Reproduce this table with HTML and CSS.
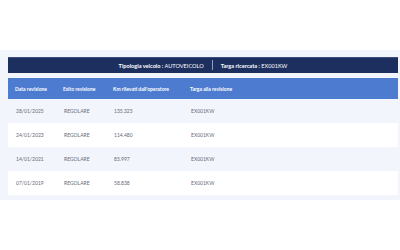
FILE: index.html
```html
<!DOCTYPE html>
<html lang="it">
<head>
<meta charset="utf-8">
<link rel="stylesheet" href="styles.css">
</head>
<body>
<section class="panel">
  <div class="summary">
    <span><b>Tipologia veicolo :</b> AUTOVEICOLO</span>
    <span class="sep"></span>
    <span><b>Targa ricercata :</b> EX001KW</span>
  </div>
  <div class="grid">
    <div class="row head"><span>Data revisione</span><span>Esito revisione</span><span>Km rilevati dall'operatore</span><span>Targa alla revisione</span></div>
    <div class="row"><span>28/01/2025</span><span>REGOLARE</span><span>135.325</span><span>EX001KW</span></div>
    <div class="row"><span>24/01/2023</span><span>REGOLARE</span><span>114.480</span><span>EX001KW</span></div>
    <div class="row"><span>14/01/2021</span><span>REGOLARE</span><span>85.997</span><span>EX001KW</span></div>
    <div class="row"><span>07/01/2019</span><span>REGOLARE</span><span>58.838</span><span>EX001KW</span></div>
  </div>
</section>
</body>
</html>
```
FILE: styles.css
```css
html, body { margin: 0; padding: 0; background: #ffffff; }
body { font-family: Lato, "Open Sans", sans-serif; }
.panel {
  margin-top: 50px;
  background: #f2f6fc;
  padding: 7px 2px 5px 8px;
}
.summary {
  height: 16px;
  background: #1d2f5f;
  color: #ffffff;
  font-size: 5.6px;
  display: flex;
  align-items: center;
  justify-content: center;
  gap: 8px;
  box-shadow: inset 0 1px 0 #3a4d7c;
}
.summary b { font-weight: 700; }
.sep { width: 1px; height: 10px; background: #8ea0c6; }
.grid { margin-top: 5px; display: flex; flex-direction: column; }
.row {
  display: grid;
  grid-template-columns: 48px 50px 77px 1fr;
  align-items: center;
  height: 24px;
  font-size: 5px;
  color: #646a78;
}
.row span { padding-left: 8px; }
.row.head {
  height: 21px;
  background: #4d7bcf;
  color: #ffffff;
  font-weight: 700;
}
.row.head span { padding-left: 7px; }
.row:nth-child(even) { background: #f2f6fc; }
.row:nth-child(odd):not(.head) { background: #ffffff; }
```
